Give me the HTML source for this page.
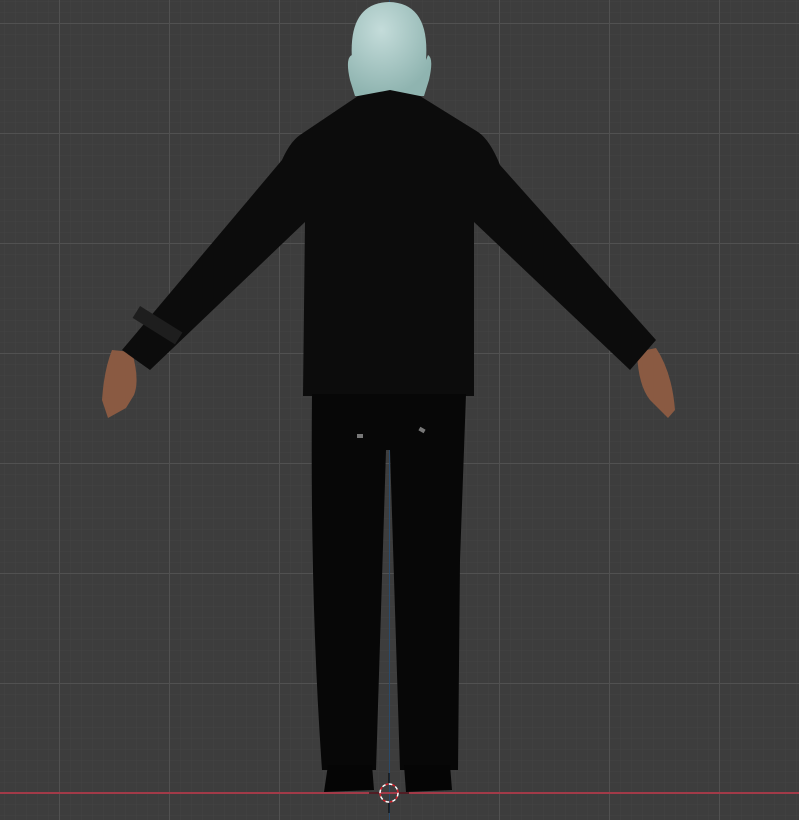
<!DOCTYPE html>
<html><head><style>
html,body{margin:0;padding:0;width:799px;height:820px;overflow:hidden;background:#3d3d3d}
svg{display:block}
</style></head><body>
<svg width="799" height="820" viewBox="0 0 799 820" xmlns="http://www.w3.org/2000/svg">
<defs>
<pattern id="minor" x="4" y="1" width="11" height="11" patternUnits="userSpaceOnUse">
<path d="M0 0H11M0 0V11" stroke="#444" stroke-width="1" fill="none"/>
</pattern>
<pattern id="major" x="59" y="23" width="110" height="110" patternUnits="userSpaceOnUse">
<path d="M0 0.5H110M0.5 0V110" stroke="#515151" stroke-width="1" fill="none"/>
</pattern>
<radialGradient id="head" cx="0.4" cy="0.3" r="0.7">
<stop offset="0" stop-color="#c4dcda"/><stop offset="1" stop-color="#8fb4b0"/>
</radialGradient>
</defs>
<rect width="799" height="820" fill="#3d3d3d"/>
<rect width="799" height="820" fill="url(#minor)"/>
<rect width="799" height="820" fill="url(#major)"/>
<line x1="389.5" y1="0" x2="389.5" y2="820" stroke="#2a4a6a" stroke-width="1"/>
<line x1="0" y1="793" x2="799" y2="793" stroke="#a23a48" stroke-width="2"/>
<path d="M352 60 Q348 3 389 2 Q430 3 426 60 L428 55 Q434 58 429 80 L424 96 L355 96 L350 80 Q345 58 352 55Z" fill="url(#head)"/>
<path d="M112 350 L132 352 Q140 380 134 395 L126 408 L108 418 L102 400 Q104 370 112 350Z" fill="#8a5a42"/>
<path d="M637 352 L656 348 Q672 372 675 410 L668 418 L650 400 Q638 385 637 352Z" fill="#8a5a42"/>
<path d="M358 96 L390 90 L420 96 L478 132 Q490 140 500 165 L656 340 L630 370 L474 222 L474 396 L303 396 L305 222 L150 370 L122 350 L282 160 Q290 142 300 135Z" fill="#0c0c0c"/>
<rect x="132" y="318" width="50" height="14" transform="rotate(32 157 326)" fill="#1e1e1e"/>
<path d="M312 394 L466 394 L460 560 L458 770 L400 770 L390 450 L386 450 L376 770 L322 770 Q310 600 312 394Z" fill="#070707"/>
<rect x="357" y="434" width="6" height="4" fill="#777"/>
<rect x="419" y="428" width="6" height="4" fill="#777" transform="rotate(30 422 430)"/>
<path d="M328 765 L372 765 L374 790 L324 792Z" fill="#050505"/>
<path d="M404 765 L450 765 L452 790 L406 792Z" fill="#050505"/>
<circle cx="389" cy="793" r="9" fill="none" stroke="#fff" stroke-width="1.5" stroke-dasharray="4 3"/>
<circle cx="389" cy="793" r="9" fill="none" stroke="#d0202a" stroke-width="1.5" stroke-dasharray="3 4" stroke-dashoffset="3.5"/>
<path d="M389 773V783M389 803V813M369 793H379M399 793H409" stroke="#000" stroke-width="1"/>
</svg>
</body></html>
